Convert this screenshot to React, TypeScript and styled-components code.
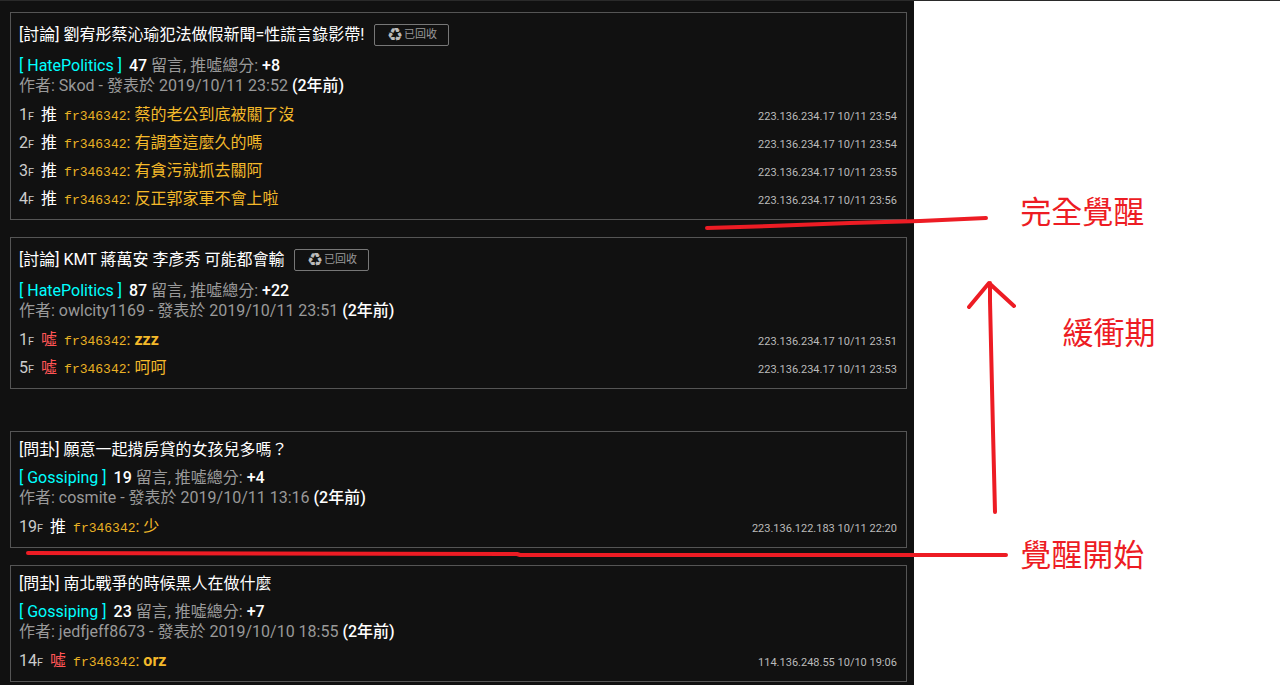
import React from "react";
import styled, { createGlobalStyle } from "styled-components";

const GlobalStyle = createGlobalStyle`
  *, *::before, *::after { box-sizing: border-box; }
  body {
    margin: 0;
    background: #fff;
    font-family: Roboto, "Noto Sans CJK TC", sans-serif;
    font-size: 16px;
    line-height: 20px;
  }
`;

const Page = styled.div`
  position: relative;
  display: flex;
  min-height: 100vh;
  overflow: hidden;
  border-top: 1px solid #2a2a2a;
`;

const Feed = styled.main`
  display: flex;
  flex-direction: column;
  gap: 17px;
  width: 71.4%;
  padding: 11px 7px 2px 10px;
  background: #111;
  color: #999;
`;

const Card = styled.article<{ $spaced?: boolean }>`
  display: flex;
  flex-direction: column;
  margin-top: ${(p) => (p.$spaced ? 25 : 0)}px;
  padding: 8px 9px 7px 8px;
  border: 1px solid #555;
`;

const TitleRow = styled.header`
  display: flex;
  align-items: center;
  gap: 10px;
  margin-bottom: 8px;
`;

const Title = styled.h2`
  margin: 0;
  font-size: 16px;
  font-weight: 400;
  line-height: 20px;
`;

const TitleLink = styled.a`
  color: #fff;
  text-decoration: none;
`;

const RecycledButton = styled.button`
  display: flex;
  align-items: center;
  justify-content: center;
  gap: 1px;
  width: 75px;
  height: 22px;
  margin: 3px 0 2px;
  padding: 0;
  border: 1px solid #777;
  border-radius: 2px;
  background: transparent;
  color: #999;
  font: 11px/20px Roboto, "Noto Sans CJK TC", sans-serif;
`;

const RecycleGlyph = styled.span`
  color: #bbb;
  font: 18px/20px "DejaVu Sans", sans-serif;
`;

const MetaLine = styled.div`
  white-space: pre;
`;

const BoardLink = styled.a`
  margin-right: 7px;
  color: #0ff;
  text-decoration: none;
`;

const Strong = styled.strong`
  color: #fff;
  font-weight: 500;
`;

const Age = styled(Strong)`
  margin-left: 4px;
`;

const Comments = styled.ul`
  display: flex;
  flex-direction: column;
  gap: 1px;
  margin: 5px 0 0;
  padding: 0;
  list-style: none;
`;

const Comment = styled.li`
  display: flex;
  align-items: baseline;
  height: 27px;
  line-height: 27px;
`;

const Floor = styled.span`
  color: #ccc;

  small { font-size: 11px; }
`;

const Tag = styled.span<{ $boo?: boolean }>`
  margin: 0 7px;
  color: ${(p) => (p.$boo ? "#f55" : "#fff")};
`;

const Author = styled.a`
  color: #eab224;
  font-family: "Courier New", "Liberation Mono", monospace;
  font-size: 13px;
  text-decoration: none;
`;

const Message = styled.span<{ $bold: boolean }>`
  flex: 1;
  color: #f4b92a;
  white-space: pre;

  b { font-weight: ${(p) => (p.$bold ? 700 : 400)}; }
`;

const Origin = styled.span`
  color: #bbb;
  font-size: 11px;
`;

const Strokes = styled.svg`
  position: absolute;
  inset: 0;
  width: 100%;
  pointer-events: none;
`;

const Note = styled.p<{ $left: number; $top: number }>`
  position: absolute;
  left: ${(p) => p.$left}%;
  top: ${(p) => p.$top}px;
  margin: 0;
  color: #ed1c24;
  font: 400 31px/40px "DFKai-SB", "BiauKai", "Noto Sans CJK TC", sans-serif;
  white-space: nowrap;
`;

type Push = { floor: number; boo?: boolean; text: string; origin: string };
type Post = {
  title: string;
  recycled?: boolean;
  board: string;
  replies: number;
  score: string;
  author: string;
  date: string;
  spaced?: boolean;
  pushes: Push[];
};

const posts: Post[] = [
  {
    title: "[討論] 劉宥彤蔡沁瑜犯法做假新聞=性謊言錄影帶!",
    recycled: true,
    board: "HatePolitics",
    replies: 47,
    score: "+8",
    author: "Skod",
    date: "2019/10/11 23:52",
    pushes: [
      { floor: 1, text: "蔡的老公到底被關了沒", origin: "223.136.234.17 10/11 23:54" },
      { floor: 2, text: "有調查這麼久的嗎", origin: "223.136.234.17 10/11 23:54" },
      { floor: 3, text: "有貪污就抓去關阿", origin: "223.136.234.17 10/11 23:55" },
      { floor: 4, text: "反正郭家軍不會上啦", origin: "223.136.234.17 10/11 23:56" },
    ],
  },
  {
    title: "[討論] KMT 蔣萬安 李彥秀 可能都會輸",
    recycled: true,
    board: "HatePolitics",
    replies: 87,
    score: "+22",
    author: "owlcity1169",
    date: "2019/10/11 23:51",
    pushes: [
      { floor: 1, boo: true, text: "zzz", origin: "223.136.234.17 10/11 23:51" },
      { floor: 5, boo: true, text: "呵呵", origin: "223.136.234.17 10/11 23:53" },
    ],
  },
  {
    title: "[問卦] 願意一起揹房貸的女孩兒多嗎？",
    board: "Gossiping",
    replies: 19,
    score: "+4",
    author: "cosmite",
    date: "2019/10/11 13:16",
    spaced: true,
    pushes: [{ floor: 19, text: "少", origin: "223.136.122.183 10/11 22:20" }],
  },
  {
    title: "[問卦] 南北戰爭的時候黑人在做什麼",
    board: "Gossiping",
    replies: 23,
    score: "+7",
    author: "jedfjeff8673",
    date: "2019/10/10 18:55",
    pushes: [{ floor: 14, boo: true, text: "orz", origin: "114.136.248.55 10/10 19:06" }],
  },
];

function PostCard({ post }: { post: Post }) {
  return (
    <Card $spaced={post.spaced}>
      <TitleRow>
        <Title><TitleLink href="#">{post.title}</TitleLink></Title>
        {post.recycled && (
          <RecycledButton type="button">
            <RecycleGlyph aria-hidden>♻</RecycleGlyph>
            已回收
          </RecycledButton>
        )}
      </TitleRow>
      <MetaLine>
        <BoardLink href="#">{`[ ${post.board} ]`}</BoardLink>
        <Strong>{post.replies}</Strong>{" 留言, 推噓總分: "}<Strong>{post.score}</Strong>
      </MetaLine>
      <MetaLine>
        {`作者: ${post.author} - 發表於 ${post.date}`}<Age>(2年前)</Age>
      </MetaLine>
      <Comments>
        {post.pushes.map((push) => (
          <Comment key={push.floor}>
            <Floor>{push.floor}<small>F</small></Floor>
            <Tag $boo={push.boo}>{push.boo ? "噓" : "推"}</Tag>
            <Author href="#">fr346342</Author>
            <Message $bold={/^[a-z]+$/.test(push.text)}>: <b>{push.text}</b></Message>
            <Origin>{push.origin}</Origin>
          </Comment>
        ))}
      </Comments>
    </Card>
  );
}

export default function App() {
  return (
    <>
      <GlobalStyle />
      <Page>
        <Feed>
          {posts.map((post) => <PostCard key={post.title} post={post} />)}
        </Feed>
        <Strokes viewBox="0 0 1280 684" fill="none" stroke="#ed1c24" strokeWidth="4" strokeLinecap="round" strokeLinejoin="round" aria-hidden>
          <path d="M707 227 L770 225 L850 222 L920 220 L986 217" />
          <path d="M28 552 L517 553 L520 554 H1006" />
          <path d="M995 511 L993 430 L990 300 V282 M969 306 L989 282 L1014 305" />
        </Strokes>
        <Note $left={79.7} $top={189}>完全覺醒</Note>
        <Note $left={83} $top={310}>緩衝期</Note>
        <Note $left={79.7} $top={532}>覺醒開始</Note>
      </Page>
    </>
  );
}
